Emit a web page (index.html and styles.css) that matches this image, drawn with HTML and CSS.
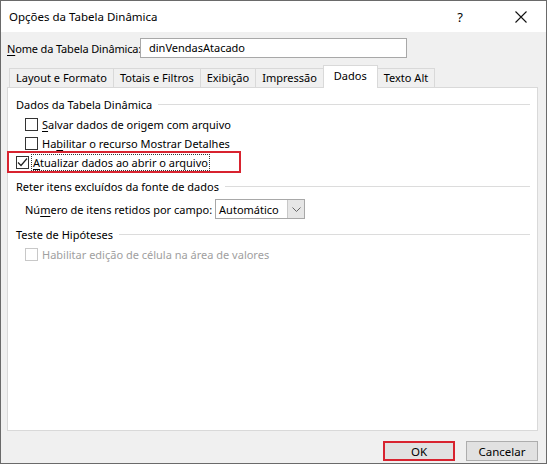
FILE: index.html
```html
<!DOCTYPE html>
<html lang="pt-BR">
<head>
    <meta charset="UTF-8">
    <title>Opções da Tabela Dinâmica</title>
    <link rel="stylesheet" href="styles.css">
</head>
<body>
    <div class="dialog">
        <div class="titlebar">
            <span class="title">Opções da Tabela Dinâmica</span>
            <span class="title-help">?</span>
            <svg class="title-close" width="12" height="12" viewBox="0 0 12 12">
                <path d="M0.5 0.5 L11.5 11.5 M11.5 0.5 L0.5 11.5" stroke="#111" stroke-width="1.1" fill="none"/>
            </svg>
        </div>

        <div class="dialog-body">
            <div class="name-row">
                <label><u>N</u>ome da Tabela Dinâmica:</label>
                <div class="textbox">dinVendasAtacado</div>
            </div>

            <div class="tabs">
                <div class="tab">Layout e Formato</div>
                <div class="tab">Totais e Filtros</div>
                <div class="tab">Exibição</div>
                <div class="tab">Impressão</div>
                <div class="tab active">Dados</div>
                <div class="tab">Texto Alt</div>
            </div>

            <div class="tab-panel">
                <div class="group-title"><span>Dados da Tabela Dinâmica</span></div>

                <div class="check-row">
                    <span class="checkbox"></span>
                    <span><u>S</u>alvar dados de origem com arquivo</span>
                </div>
                <div class="check-row">
                    <span class="checkbox"></span>
                    <span>Ha<u>b</u>ilitar o recurso Mostrar Detalhes</span>
                </div>
                <div class="highlight">
                    <div class="check-row">
                        <span class="checkbox">
                            <svg width="11" height="11" viewBox="0 0 11 11">
                                <path d="M1 5.5 L4 8.5 L10 1.5" stroke="#222" stroke-width="1.2" fill="none"/>
                            </svg>
                        </span>
                        <span class="focus-text"><u>A</u>tualizar dados ao abrir o arquivo</span>
                    </div>
                </div>

                <div class="group-title second"><span>Reter itens excluídos da fonte de dados</span></div>

                <div class="select-row">
                    <label>Nú<u>m</u>ero de itens retidos por campo:</label>
                    <div class="select">
                        <span class="select-value">Automático</span>
                        <span class="select-arrow">
                            <svg width="9" height="5" viewBox="0 0 9 5">
                                <path d="M0.5 0.5 L4.5 4.5 L8.5 0.5" stroke="#666" stroke-width="1" fill="none"/>
                            </svg>
                        </span>
                    </div>
                </div>

                <div class="group-title third"><span>Teste de Hipóteses</span></div>

                <div class="check-row disabled">
                    <span class="checkbox"></span>
                    <span>Habilitar edição de célula na área de valores</span>
                </div>
            </div>

            <div class="buttons">
                <button class="btn btn-ok">OK</button>
                <button class="btn">Cancelar</button>
            </div>
        </div>
    </div>
</body>
</html>
```

FILE: styles.css
```css
html, body {
    margin: 0;
    padding: 0;
}

body {
    font-family: "Noto Sans", "Open Sans", sans-serif;
    font-size: 11px;
    color: #000;
    background: #f0f0f0;
}

u {
    text-decoration: underline;
    text-underline-offset: 2px;
}

.dialog {
    width: 547px;
    height: 464px;
    box-sizing: border-box;
    border: 1px solid #6a6a6a;
    background: #f0f0f0;
    display: flex;
    flex-direction: column;
}

/* title bar */
.titlebar {
    height: 31px;
    background: #fff;
    display: flex;
    align-items: center;
    padding: 0 19px 0 8px;
}

.title {
    flex: 1;
    font-size: 11.5px;
}

.title-help {
    margin-right: 52px;
    font-size: 13px;
}

/* body */
.dialog-body {
    padding: 6px 8px 0 6px;
    display: flex;
    flex-direction: column;
}

.name-row {
    display: flex;
    align-items: center;
    height: 20px;
}

.name-row label {
    white-space: nowrap;
    width: 133px;
    letter-spacing: -0.15px;
}

.textbox {
    width: 257px;
    height: 18px;
    line-height: 18px;
    border: 1px solid #a8a8a8;
    background: #fff;
    padding-left: 8px;
}

/* tabs */
.tabs {
    display: flex;
    align-items: flex-end;
    height: 21px;
    margin-top: 8px;
    padding-left: 2px;
    position: relative;
    z-index: 1;
}

.tab {
    height: 18px;
    line-height: 18px;
    padding: 0 6px;
    border: 1px solid #d9d9d9;
    border-bottom: none;
    margin-right: -1px;
    background: #f0f0f0;
    white-space: nowrap;
}

.tab.active {
    height: 22px;
    line-height: 19px;
    margin-bottom: -1px;
    background: #fff;
    padding: 0 10px;
}

.tab-panel {
    height: 334px;
    border: 1px solid #d9d9d9;
    background: #fff;
    padding: 8px 7px 0 8px;
}

.group-title {
    display: flex;
    align-items: center;
    height: 16px;
    margin-bottom: 3px;
}

.group-title::after {
    content: "";
    flex: 1;
    height: 1px;
    background: #dcdcdc;
    margin-left: 6px;
}

.group-title.second {
    margin-top: 5px;
    margin-bottom: 5px;
}

.group-title.third {
    margin-top: 7px;
    margin-bottom: 3px;
}

.check-row {
    display: flex;
    align-items: center;
    height: 19px;
    padding-left: 9px;
}

.checkbox {
    width: 11px;
    height: 11px;
    border: 1px solid #333;
    background: #fff;
    margin-right: 4px;
    display: flex;
    align-items: center;
    justify-content: center;
}

.focus-text {
    outline: 1px dotted #333;
    outline-offset: 0;
    padding: 0 1px;
    margin-left: -1px;
}

.check-row.disabled {
    color: #a0a0a0;
}

.check-row.disabled .checkbox {
    border-color: #c8c8c8;
}

/* annotation box around the refresh option */
.highlight {
    border: 2px solid #d8232f;
    margin: -2px 0 0 -9px;
    width: 223px;
    padding-left: 7px;
    height: 18px;
    display: flex;
    align-items: center;
}

.highlight .check-row {
    padding-left: 0;
}

.select-row {
    display: flex;
    align-items: center;
    height: 20px;
    padding-left: 9px;
}

.select-row label {
    margin-right: 3px;
}

.select {
    width: 88px;
    height: 18px;
    border: 1px solid #a8a8a8;
    background: #fff;
    display: flex;
    align-items: center;
}

.select-value {
    flex: 1;
    padding-left: 3px;
}

.select-arrow {
    width: 16px;
    height: 18px;
    background: #e6e6e6;
    border-left: 1px solid #c8c8c8;
    display: flex;
    align-items: center;
    justify-content: center;
}

/* buttons */
.buttons {
    display: flex;
    justify-content: flex-end;
    gap: 11px;
    margin-top: 10px;
}

.btn {
    width: 72px;
    height: 20px;
    font-family: inherit;
    font-size: 11.5px;
    background: #e1e1e1;
    border: 1px solid #adadad;
    padding: 0;
}

.btn-ok {
    border: 2px solid #d8232f;
}
```
